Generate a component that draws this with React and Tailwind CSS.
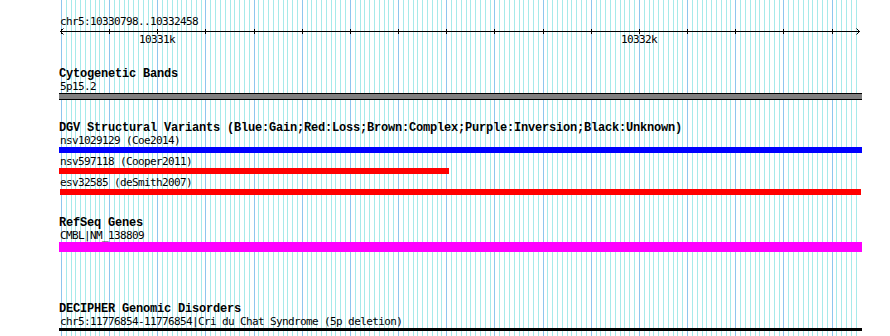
import React from "react";

const START = 10330798;
const END = 10332458;
const X0 = 60;
const SPAN = 800;
const LEFT = 59;
const toX = (bp) => Math.round(X0 + ((bp - START) * SPAN) / (END - START + 1));

const minor = [];
for (let bp = 10330800; bp <= END; bp += 10) minor.push(bp);
const major = minor.filter((bp) => bp % 100 === 0);

const small = "font-['DejaVu_Sans_Mono',monospace] text-[11px] tracking-[-0.62px] text-black";
const bold = "font-['Liberation_Mono',monospace] font-bold text-[12px] tracking-[-0.2px] text-black";

function Grid() {
  return (
    <svg className="absolute inset-0 h-full w-full" shapeRendering="crispEdges">
      {minor.map((bp) => {
        const x = toX(bp) - LEFT + 0.5;
        const isMajor = bp % 100 === 0;
        return (
          <line
            key={bp}
            x1={x}
            x2={x}
            y1={0}
            y2={336}
            stroke={isMajor ? "#8ec6ee" : "#a6eaea"}
            strokeWidth={1}
          />
        );
      })}
    </svg>
  );
}

function Ruler() {
  return (
    <svg className="mt-[1px] block h-[5px] w-full" shapeRendering="crispEdges">
      <line x1={X0 - LEFT} x2={860 - LEFT} y1={2.5} y2={2.5} stroke="#000" strokeWidth={1} />
      {major.map((bp) => {
        const x = toX(bp) - LEFT + 0.5;
        return <line key={bp} x1={x} x2={x} y1={0} y2={5} stroke="#000" strokeWidth={1} />;
      })}
    </svg>
  );
}

function RulerArrows() {
  return (
    <svg className="absolute left-0 top-[27px] h-[9px] w-[803px]" fill="none" stroke="#000" strokeWidth="1">
      <polyline points={`${X0 - LEFT + 3.5},1.5 ${X0 - LEFT + 0.5},4.5 ${X0 - LEFT + 3.5},7.5`} />
      <polyline points={`${860 - LEFT - 3.5},1.5 ${860 - LEFT - 0.5},4.5 ${860 - LEFT - 3.5},7.5`} />
    </svg>
  );
}

export default function App() {
  const labels = [10331000, 10332000];
  return (
    <div className="h-[336px] w-[890px] overflow-hidden bg-white">
      <div className="relative ml-[59px] h-[336px] w-[803px]">
        <Grid />
        <RulerArrows />
        <div className="relative flex flex-col">
          <div className={`${small} mt-[15px] h-[13px] pl-[1px] leading-[13px] whitespace-pre`}>
            chr5:10330798..10332458
          </div>
          <Ruler />
          <div className={`${small} relative h-[13px] leading-[11px]`}>
            {labels.map((bp) => (
              <span key={bp} className="absolute top-0 whitespace-pre" style={{ left: toX(bp) - LEFT - 18 }}>
                {`${bp / 1000}k`}
              </span>
            ))}
          </div>

          <div className={`${bold} mt-[21px] h-[12px] leading-[12px] whitespace-pre`}>Cytogenetic Bands</div>
          <div className={`${small} h-[13px] pl-[1px] leading-[13px] whitespace-pre`}>5p15.2</div>
          <div className="h-[7px] w-[803px] border-y border-black bg-[#808080]" />

          <div className={`${bold} mt-[22px] h-[12px] leading-[12px] whitespace-pre`}>
            DGV Structural Variants (Blue:Gain;Red:Loss;Brown:Complex;Purple:Inversion;Black:Unknown)
          </div>
          <div className={`${small} h-[13px] pl-[1px] leading-[13px] whitespace-pre`}>nsv1029129 (Coe2014)</div>
          <div className="h-[6px] w-[803px] bg-[#0000ff]" />
          <div className={`${small} h-[15px] pl-[1px] pt-[2px] leading-[13px] whitespace-pre`}>nsv597118 (Cooper2011)</div>
          <div className="h-[6px] w-[390px] bg-[#ff0000]" />
          <div className={`${small} h-[15px] pl-[1px] pt-[2px] leading-[13px] whitespace-pre`}>esv32585 (deSmith2007)</div>
          <div className="ml-[1px] h-[6px] w-[801px] bg-[#ff0000]" />

          <div className={`${bold} mt-[22px] h-[12px] leading-[12px] whitespace-pre`}>RefSeq Genes</div>
          <div className={`${small} h-[13px] pl-[1px] leading-[13px] whitespace-pre`}>CMBL|NM_138809</div>
          <div className="h-[10px] w-[803px] bg-[#ff00ff]" />

          <div className={`${bold} mt-[51px] h-[12px] leading-[12px] whitespace-pre`}>DECIPHER Genomic Disorders</div>
          <div className={`${small} h-[13px] pl-[1px] leading-[13px] whitespace-pre`}>
            chr5:11776854-11776854|Cri du Chat Syndrome (5p deletion)
          </div>
          <div className="h-[3px] w-[803px] bg-black" />
        </div>
      </div>
    </div>
  );
}
